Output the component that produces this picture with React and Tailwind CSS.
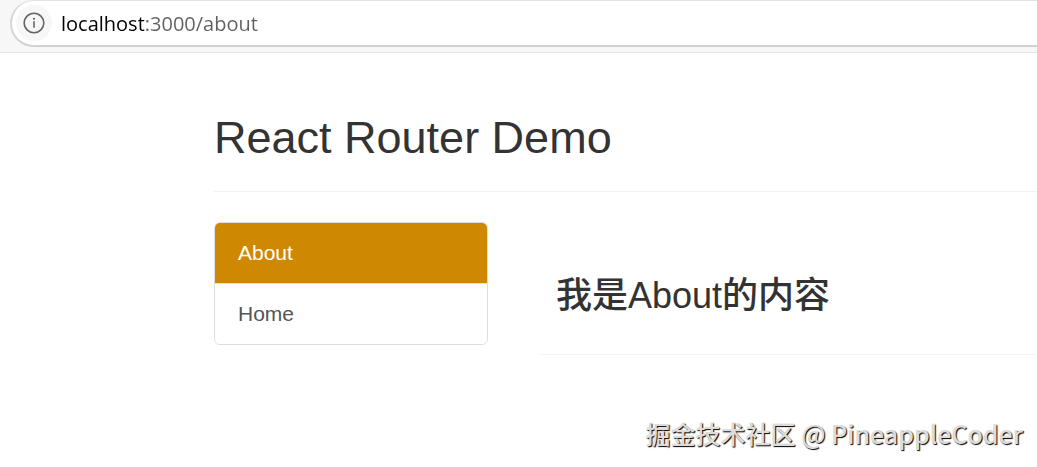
import React, { useState } from "react";

const LINKS = [
  { label: "About", path: "/about" },
  { label: "Home", path: "/home" },
];

const AddressBar = ({ path }) => (
  <header className="h-[53px] overflow-hidden border-b border-[#e6e6e6] bg-[#f7f7f7] pl-2.5">
    <div className="flex h-[47px] items-center gap-[9px] rounded-l-full border-t border-b-2 border-l-2 border-t-[#e3e3e3] border-b-[#d2d2d2] border-l-[#d6d6d6] bg-white pl-1">
      <button
        type="button"
        aria-label="View site information"
        className="flex size-9 shrink-0 items-center justify-center rounded-full bg-[#f7f7f7]"
      >
        <svg
          className="size-[22px] text-[#666666]"
          viewBox="0 0 22 22"
          fill="none"
          stroke="currentColor"
          aria-hidden="true"
        >
          <circle cx="11" cy="11" r="9.8" strokeWidth="1.6" />
          <path d="M11 9.8v5.4" strokeWidth="1.6" strokeLinecap="round" />
          <circle cx="11" cy="6.8" r="1.1" fill="currentColor" stroke="none" />
        </svg>
      </button>
      {/* host in black, the rest of the address in grey */}
      <input
        type="text"
        aria-label="Address"
        readOnly
        value={`localhost:3000${path}`}
        className="min-w-0 grow bg-[linear-gradient(to_right,#000000_83px,#606060_83px)] bg-clip-text pt-0.5 font-['Open_Sans',_sans-serif] text-[20px] leading-7 text-transparent outline-none"
      />
    </div>
  </header>
);

const Sidebar = ({ path, onNavigate }) => (
  <nav className="w-[274px] shrink-0 self-start overflow-hidden rounded-md border border-[#dddddd]">
    {LINKS.map((link) => (
      <a
        key={link.path}
        href={link.path}
        onClick={(e) => {
          e.preventDefault();
          onNavigate(link.path);
        }}
        className={`block border-b border-[#dddddd] px-[23px] py-[15px] text-[21px] leading-[30px] no-underline last:border-b-0 ${
          path === link.path ? "bg-[#cf8802] text-white" : "bg-white text-[#555555]"
        }`}
      >
        {link.label}
      </a>
    ))}
  </nav>
);

export default function App() {
  const [path, setPath] = useState("/about");
  const current = LINKS.find((link) => link.path === path);

  return (
    <div className="min-h-screen bg-white font-['Liberation_Sans','Noto_Sans_CJK_SC',sans-serif] text-[#333333]">
      <AddressBar path={path} />
      <main className="pt-[60px] pl-[214px]">
        <div className="border-b border-[#f2f2f2] pb-[28px]">
          <h2 className="text-[45px] leading-[50px]">React Router Demo</h2>
        </div>
        <div className="flex gap-[50px] pt-[30px]">
          <Sidebar path={path} onNavigate={setPath} />
          <section className="min-w-0 grow border-b border-[#f5f5f5] pt-[54px] pb-[38px] pl-[18px]">
            <h3 className="text-[36px] leading-[40px] font-medium">
              我是{current.label}的内容
            </h3>
          </section>
        </div>
      </main>
      <footer className="flex justify-end pt-[60px] pr-[14px]">
        <p className="font-['Noto_Sans_CJK_SC',sans-serif] text-[25px] leading-9 font-medium text-[#dcdcdc] [text-shadow:1px_1px_1px_#000000]">
          掘金技术社区 @ PineappleCoder
        </p>
      </footer>
    </div>
  );
}
